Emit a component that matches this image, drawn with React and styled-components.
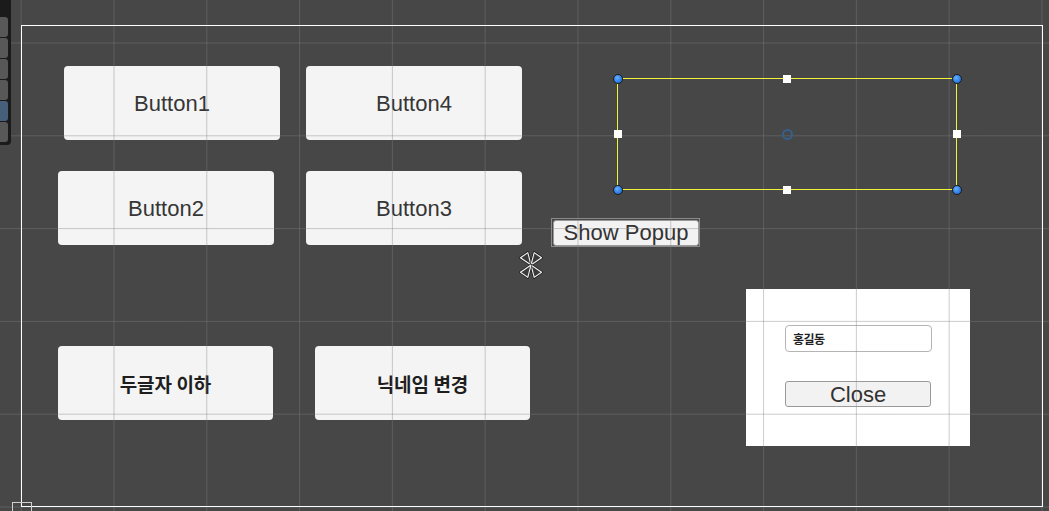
import React from "react";
import styled, { createGlobalStyle } from "styled-components";

const GlobalStyle = createGlobalStyle`
  html, body {
    margin: 0;
    padding: 0;
    background: #474747;
    overflow: hidden;
  }
  * { box-sizing: border-box; }
`;

const SceneView = styled.div`
  position: relative;
  width: 1049px;
  height: 511px;
  overflow: hidden;
  background: #474747;
  font-family: "Liberation Sans", Arial, sans-serif;
`;

const GridOverlay = styled.div`
  position: absolute;
  inset: 0;
  pointer-events: none;
  z-index: 5;
  background-image:
    linear-gradient(to right, rgba(127, 127, 127, 0.4) 1px, transparent 1px),
    linear-gradient(to bottom, rgba(127, 127, 127, 0.4) 1px, transparent 1px);
  background-size: 92.8px 92.8px;
  background-position: 20.7px 42.5px;
`;

const ToolStrip = styled.div`
  position: absolute;
  left: 0;
  top: 0;
  z-index: 10;
  width: 11px;
  height: 145px;
  padding-top: 17px;
  background: #1b1b1b;
  border-bottom-right-radius: 4px;
  display: flex;
  flex-direction: column;
  gap: 1px;
`;

const ToolButton = styled.div`
  width: 8px;
  height: 20px;
  border-radius: 0 3px 3px 0;
  background: ${(p) => (p.$active ? "#46607c" : "#585858")};
`;

const CanvasFrame = styled.div`
  position: absolute;
  left: 21px;
  top: 25px;
  width: 1022px;
  height: 482px;
  border: 1px solid #ffffff;
  z-index: 6;
  pointer-events: none;
`;

const CornerMarker = styled.div`
  position: absolute;
  left: 12px;
  top: 502px;
  width: 20px;
  height: 20px;
  border: 1px solid #cfcfcf;
  z-index: 6;
`;

const UIButton = styled.div`
  position: absolute;
  left: ${(p) => p.$x}px;
  top: ${(p) => p.$y}px;
  width: ${(p) => p.$w}px;
  height: ${(p) => p.$h}px;
  background: #f4f4f4;
  border-radius: 4px;
  display: flex;
  align-items: center;
  justify-content: center;
  color: #363636;
  font-family: "Liberation Sans", Arial, sans-serif;
  font-size: 22px;
  line-height: 1;
  padding-top: ${(p) => (p.$korean ? 0 : 2)}px;
`;

const KoreanLabel = styled.span`
  font-family: "Noto Sans CJK KR", "Noto Sans", sans-serif;
  font-weight: 700;
  font-size: 19px;
  color: #1e1e1e;
`;

const GizmoOutline = styled.div`
  position: absolute;
  left: 551px;
  top: 218px;
  width: 149px;
  height: 29px;
  border: 1px solid #8a8a8a;
  padding: 1px 0 0 1px;
`;

const SmallButton = styled.div`
  width: 146px;
  height: 26px;
  background: #f2f2f2;
  border: 1px solid #9a9a9a;
  border-radius: 3px;
  display: flex;
  align-items: center;
  justify-content: center;
  font-family: "Liberation Sans", Arial, sans-serif;
  font-size: 22px;
  line-height: 1;
  color: #333333;
  padding-top: ${(p) => p.$nudge || 0}px;
`;

const SelectionRect = styled.div`
  position: absolute;
  left: 617px;
  top: 78px;
  width: 340px;
  height: 112px;
  border: 1px solid #f2f23a;
  z-index: 7;
`;

const CornerHandle = styled.div`
  position: absolute;
  width: 10px;
  height: 10px;
  border-radius: 50%;
  background: radial-gradient(circle at 40% 35%, #6aaeff 0%, #2b7de6 60%, #1d66c4 100%);
  border: 1px solid #1c1c1c;
  left: ${(p) => (p.$right ? "auto" : "-5.5px")};
  right: ${(p) => (p.$right ? "-5.5px" : "auto")};
  top: ${(p) => (p.$bottom ? "auto" : "-5.5px")};
  bottom: ${(p) => (p.$bottom ? "-5.5px" : "auto")};
`;

const EdgeHandle = styled.div`
  position: absolute;
  width: 8px;
  height: 8px;
  background: #ffffff;
  ${(p) =>
    p.$side === "top"
      ? "top: -4.5px; left: calc(50% - 4px);"
      : p.$side === "bottom"
      ? "bottom: -4.5px; left: calc(50% - 4px);"
      : p.$side === "left"
      ? "left: -4.5px; top: calc(50% - 4px);"
      : "right: -4.5px; top: calc(50% - 4px);"}
`;

const PivotRing = styled.div`
  position: absolute;
  width: 11px;
  height: 11px;
  left: calc(50% - 5.5px);
  top: calc(50% - 5.5px);
  border-radius: 50%;
  border: 2px solid #355f8c;
`;

const PopupPanel = styled.div`
  position: absolute;
  left: 746px;
  top: 289px;
  width: 224px;
  height: 157px;
  background: #ffffff;
  padding: 36px 0 0 39px;
  display: flex;
  flex-direction: column;
  gap: 29px;
`;

const NameInput = styled.div`
  width: 147px;
  height: 27px;
  border: 1px solid #b4b4b4;
  border-radius: 4px;
  background: #ffffff;
  display: flex;
  align-items: center;
  padding-left: 7px;
  font-family: "Noto Sans CJK KR", "Noto Sans", sans-serif;
  font-weight: 700;
  font-size: 12px;
  letter-spacing: -0.6px;
  color: #222222;
`;

const CursorIcon = styled.svg`
  position: absolute;
  left: 516px;
  top: 250px;
  z-index: 8;
`;

const buttons = [
  { label: "Button1", x: 64, y: 66 },
  { label: "Button4", x: 306, y: 66 },
  { label: "Button2", x: 58, y: 171 },
  { label: "Button3", x: 306, y: 171 },
];

const koreanButtons = [
  { label: "두글자 이하", x: 58, y: 346 },
  { label: "닉네임 변경", x: 315, y: 346 },
];

function MoveCursor() {
  const petals = [-125, -55, 55, 125];
  return (
    <CursorIcon width="30" height="30" viewBox="-15 -15 30 30">
      {petals.map((a) => (
        <g key={a} transform={`rotate(${a})`}>
          <polygon
            points="0,0 12,-4.5 12,4.5"
            fill="#3a3a3a"
            stroke="#1a1a1a"
            strokeWidth="2.6"
            strokeLinejoin="round"
          />
          <polygon
            points="0,0 12,-4.5 12,4.5"
            fill="#3a3a3a"
            stroke="#f2f2f2"
            strokeWidth="1.1"
            strokeLinejoin="round"
          />
        </g>
      ))}
    </CursorIcon>
  );
}

export default function App() {
  return (
    <>
      <GlobalStyle />
      <SceneView>
        {buttons.map((b) => (
          <UIButton key={b.label} $x={b.x} $y={b.y} $w={216} $h={74}>
            {b.label}
          </UIButton>
        ))}
        {koreanButtons.map((b) => (
          <UIButton key={b.label} $x={b.x} $y={b.y} $w={215} $h={74} $korean>
            <KoreanLabel>{b.label}</KoreanLabel>
          </UIButton>
        ))}

        <GizmoOutline>
          <SmallButton>Show Popup</SmallButton>
        </GizmoOutline>

        <PopupPanel>
          <NameInput>홍길동</NameInput>
          <SmallButton $nudge={2}>Close</SmallButton>
        </PopupPanel>

        <GridOverlay />
        <CanvasFrame />
        <CornerMarker />

        <SelectionRect>
          <CornerHandle />
          <CornerHandle $right />
          <CornerHandle $bottom />
          <CornerHandle $right $bottom />
          <EdgeHandle $side="top" />
          <EdgeHandle $side="bottom" />
          <EdgeHandle $side="left" />
          <EdgeHandle $side="right" />
          <PivotRing />
        </SelectionRect>

        <MoveCursor />

        <ToolStrip>
          <ToolButton />
          <ToolButton />
          <ToolButton />
          <ToolButton />
          <ToolButton $active />
          <ToolButton />
        </ToolStrip>
      </SceneView>
    </>
  );
}
